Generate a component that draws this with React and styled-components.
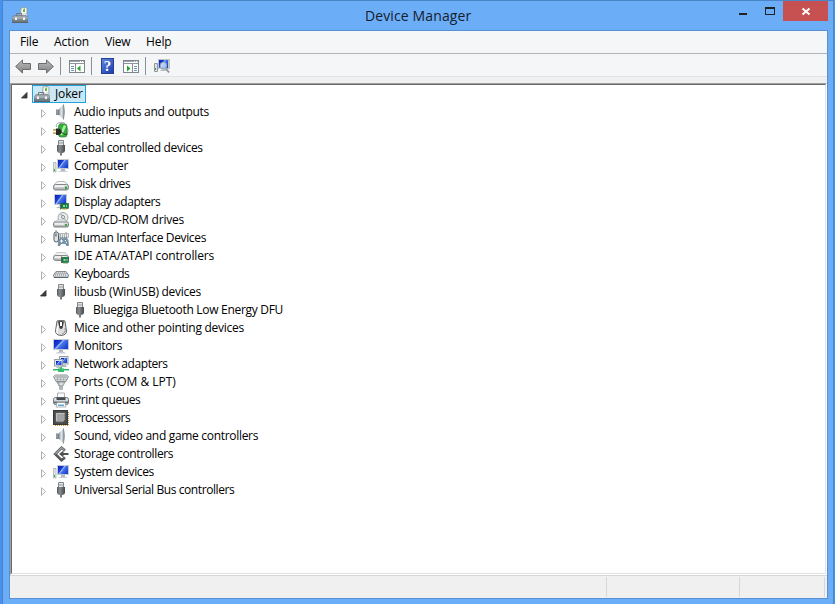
import React from "react";
import styled, { createGlobalStyle, css } from "styled-components";

const GlobalStyle = createGlobalStyle`
  * { box-sizing: border-box; }
  html, body { margin: 0; padding: 0; overflow: hidden; }
  body { font-family: "Open Sans", "Noto Sans", sans-serif; font-size: 12px; color: #000; }
`;

const Desktop = styled.div`
  width: 835px;
  height: 604px;
  padding: 0 0 0 2px;
  background: #4593ef;
`;
const Window = styled.div`
  width: 832px;
  height: 604px;
  border: 1px solid #4a86c7;
  border-bottom: 0;
  background: #6badf6;
  padding: 0 6px 0 6px;
  display: flex;
  flex-direction: column;
`;
const TitleBar = styled.header`
  height: 29px;
  flex: none;
  display: grid;
  grid-template-columns: 140px 1fr 96px;
  margin-right: -6px;
  padding-left: 3px;
`;
const TitleIcon = styled.div`
  padding: 6px 0 0 0;
  height: 23px;
`;
const Title = styled.h1`
  margin: 0;
  padding: 0 0 0 213px;
  font-size: 14px;
  font-weight: 400;
  line-height: 29px;
  white-space: nowrap;
  color: #14202e;
  letter-spacing: 0.12px;
`;
const WindowButtons = styled.div`
  display: flex;
`;
const WindowButton = styled.button`
  border: 0;
  padding: 0;
  width: ${(p) => p.$w}px;
  height: 20px;
  background: ${(p) => (p.$close ? "#c75050" : "transparent")};
  display: flex;
`;
const Client = styled.main`
  width: 819px;
  height: 569px;
  border: 1px solid #5790d3;
  background: #f0f0f0;
  display: flex;
  flex-direction: column;
`;
const MenuBar = styled.nav`
  height: 23px;
  flex: none;
  display: flex;
  background: #f5f6f7;
  border-bottom: 1px solid #b0b4b8;
  padding-left: 10px;
`;
const MenuItem = styled.span`
  width: ${(p) => p.$w}px;
  line-height: 21px;
  letter-spacing: ${(p) => p.$ls || 0}px;
`;
const ToolBar = styled.div`
  height: 23px;
  flex: none;
  display: flex;
  align-items: flex-start;
  padding: 4px 0 0 5px;
  background: #f5f6f7;
  border-bottom: 1px solid #e3e3e3;
`;
const Tool = styled.span`
  width: ${(p) => p.$w || 16}px;
  height: 17px;
  margin-right: ${(p) => p.$gap || 0}px;
`;
const ToolDivider = styled.span`
  width: 1px;
  height: 18px;
  margin: -1px ${(p) => p.$gap}px 0 0;
  background: #8c8f93;
`;
const TreePane = styled.section`
  height: 492px;
  flex: none;
  margin-top: 6px;
  border: 1px solid #a0a0a0;
  border-right-color: #fff;
  border-bottom-color: #fff;
  background: #fff;
`;
const Tree = styled.ul`
  height: 490px;
  margin: 0;
  padding: 0;
  list-style: none;
  border: 1px solid #696969;
  border-right-color: #e3e3e3;
  border-bottom-color: #e3e3e3;
`;
const Row = styled.li`
  height: 18px;
  display: flex;
  align-items: center;
  padding-left: ${(p) => 8 + p.$depth * 19}px;
`;
const Twisty = styled.span`
  width: 12px;
  height: 18px;
  flex: none;
`;
const Entry = styled.span`
  display: flex;
  height: 18px;
  border: 1px solid transparent;
  padding: 0 0 0 1px;
  white-space: nowrap;
  ${(p) => p.$selected && css`
    width: 54px;
    border-color: #26a0da;
    background: #cbe8f6;
  `}
`;
const Label = styled.span`
  padding-left: 5px;
  line-height: 15px;
  letter-spacing: ${(p) => p.$ls}px;
`;
const StatusBar = styled.footer`
  flex: 1;
  display: flex;
  border-top: 1px solid #d7d7d7;
  padding: 1px 2px 1px 0;
`;
const StatusCell = styled.span`
  ${(p) => (p.$w ? css`width: ${p.$w}px;` : css`flex: 1;`)}
  border-right: 1px solid #d7d7d7;
`;
const Svg = styled.svg`
  display: block;
  flex: none;
`;

const Icon = ({ children, w = 16, h = 16 }) => (
  <Svg width={w} height={h} viewBox={`0 0 ${w} ${h}`}>{children}</Svg>
);

const Defs = () => (
  <Svg width="0" height="0">
    <defs>
      <linearGradient id="screen" x1="0" y1="0" x2="1" y2=".6">
        <stop offset="0" stopColor="#0a1fae" />
        <stop offset=".42" stopColor="#1b40dc" />
        <stop offset=".5" stopColor="#a9c0f8" />
        <stop offset=".6" stopColor="#4a74ea" />
        <stop offset="1" stopColor="#1a45cf" />
      </linearGradient>
      <linearGradient id="metal" x1="0" y1="0" x2="0" y2="1">
        <stop offset="0" stopColor="#f4f4f4" />
        <stop offset="1" stopColor="#a4a8aa" />
      </linearGradient>
      <linearGradient id="dark" x1="0" y1="0" x2="1" y2="0">
        <stop offset="0" stopColor="#55585b" />
        <stop offset=".35" stopColor="#8b8e91" />
        <stop offset="1" stopColor="#45474a" />
      </linearGradient>
      <linearGradient id="steel" x1="0" y1="0" x2="0" y2="1">
        <stop offset="0" stopColor="#a5adb2" />
        <stop offset="1" stopColor="#6b757b" />
      </linearGradient>
      <linearGradient id="cone" x1="0" y1="0" x2="1" y2="0">
        <stop offset="0" stopColor="#8a9499" />
        <stop offset=".5" stopColor="#e4e8ea" />
        <stop offset="1" stopColor="#a9b4b9" />
      </linearGradient>
      <linearGradient id="arrow" x1="0" y1="0" x2="0" y2="1">
        <stop offset="0" stopColor="#bdbdbd" />
        <stop offset="1" stopColor="#808080" />
      </linearGradient>
    </defs>
  </Svg>
);

const DeviceManagerIcon = () => (
  <Icon>
    <path d="M8 10L9 1l5-.5 1 1V10z" fill="#dfe4e6" stroke="#90999e" strokeWidth=".7" />
    <rect x="10" y="1.500" width="4" height="4.500" fill="#fff" />
    <path d="M11 5V3l1-1.500h1V5z" fill="#62b52d" />
    <path d="M4.500 9V6.500h5V9" fill="none" stroke="#70797f" />
    <path d="M2 8.500h12l2 2.500v4H0v-4z" fill="url(#steel)" stroke="#69757c" strokeWidth=".6" />
    <path d="M.5 11h15" stroke="#c0c9ce" strokeWidth=".8" />
    <path d="M3 10.500h2v2.500H3zm8 0h2v2.500h-2z" fill="#f3f4f4" />
    <path d="M0 15.500h16" stroke="#5c656b" />
  </Icon>
);
const SpeakerIcon = () => (
  <Icon>
    <path d="M3 5.500h3v5.500H3z" fill="#7b8286" />
    <path d="M6 5l4.500-4.500v15L6 11z" fill="url(#cone)" />
    <path d="M10.500.5q2 7 0 15z" fill="#7d8f98" stroke="#7d8f98" strokeWidth=".6" />
    <path d="M4 6v4.500" stroke="#a8afb3" />
  </Icon>
);
const BatteryIcon = () => (
  <Icon>
    <path d="M3.500 5C2 1.500 7-.5 9 1.500M13.500 5q3 3 .5 7" fill="none" stroke="#899091" strokeWidth=".8" />
    <rect x="7.500" y=".5" width="4" height="2" rx="1" fill="#c9cecc" stroke="#7b837e" strokeWidth=".5" />
    <rect x="5.500" y="2" width="8.500" height="13" rx="2.500" fill="#2fb335" stroke="#317238" strokeWidth=".7" />
    <path d="M8 13l4-9.500" stroke="#aef0a4" strokeWidth="2.500" />
    <path d="M0 7.800h3.500M0 11.200h3.500" stroke="#b08c20" strokeWidth="1.200" />
    <path d="M3 6.500h2c5 0 5 6.500 0 6.500H3z" fill="#292b29" />
    <path d="M8.500 10.500c3 1 3 3 6 1.500" fill="none" stroke="#333" />
  </Icon>
);
const UsbIcon = () => (
  <Icon>
    <path d="M5.500.5h5v5h-5z" fill="#dfe2e3" stroke="#83888b" />
    <path d="M7 2v2m2-2v2" stroke="#888c8e" strokeWidth=".8" />
    <path d="M4 5h8v5.500q0 2-2.500 2.500h-3Q4 12.500 4 10.500z" fill="url(#dark)" />
    <path d="M7 13h2v2.500H7z" fill="#77797b" />
  </Icon>
);
const ComputerIcon = () => (
  <Icon>
    <path d="M.5 4.500h2.500v9.500H.5z" fill="#e4e7e8" stroke="#9da4a7" strokeWidth=".7" />
    <rect x="1" y="11" width="1" height="2" fill="#29b93a" />
    <rect x="4" y="1" width="12" height="10" fill="#c4ccd1" />
    <rect x="5" y="2" width="10" height="8" fill="url(#screen)" />
    <path d="M8 11h4v2H8z" fill="#adb5ba" />
    <path d="M5.500 14c0-2 9-2 9 0z" fill="#c5cdd1" />
  </Icon>
);
const DiskIcon = () => (
  <Icon>
    <path d="M1 9.500Q3 5.500 5 5.500h6q2 0 4 4z" fill="#f6f6f6" stroke="#a7abad" strokeWidth=".8" />
    <rect x=".5" y="8.500" width="15" height="5.500" rx="2" fill="url(#metal)" stroke="#777c7f" strokeWidth=".9" />
    <path d="M2 10.200h9" stroke="#fff" />
    <rect x="12" y="10.500" width="2" height="2.500" fill="#2da83a" />
  </Icon>
);
const DisplayIcon = () => (
  <Icon>
    <rect x="1" y="0" width="13" height="11" fill="#c4ccd1" />
    <rect x="2" y="1" width="11" height="9" fill="url(#screen)" />
    <path d="M5 11h4v3H3q2-2 6-1" fill="#aeb7bb" />
    <rect x="8" y="9.500" width="7.500" height="5" fill="#178344" stroke="#095c2b" strokeWidth=".6" />
    <path d="M10 11h2v2h-2zm3 0h1v2h-1z" fill="#9cc9aa" />
    <path d="M7.500 9v6.500" stroke="#626968" />
    <path d="M9 15h5" stroke="#cba949" />
  </Icon>
);
const DvdIcon = () => (
  <Icon>
    <circle cx="10" cy="5.500" r="5" fill="#e7ebec" stroke="#8b9498" strokeWidth=".8" />
    <path d="M10 5L7 1.500M10 5l3 4" stroke="#b5c4cb" strokeWidth="1.500" />
    <circle cx="10" cy="5" r="1.500" fill="#fff" stroke="#6b7377" strokeWidth=".8" />
    <path d="M1 10.500L3.500 8H12l3 2.500z" fill="#f5f5f5" fillOpacity=".85" stroke="#a5aaad" strokeWidth=".6" />
    <rect x=".5" y="10" width="15" height="5" rx="1.500" fill="url(#metal)" stroke="#7a7f82" />
    <path d="M2 12h9" stroke="#fff" />
    <rect x="12" y="12" width="2" height="2" fill="#36af3c" />
  </Icon>
);
const HidIcon = () => (
  <Icon>
    <path d="M3 2V0m9 3h2v5H7" fill="none" stroke="#92999d" />
    <path d="M6 3.500h9.500v4H6z" fill="#e5e8e9" stroke="#9aa1a5" strokeWidth=".7" />
    <path d="M7 5h8M7 7h8" stroke="#757d82" strokeDasharray="1 1" />
    <rect x="1" y="2" width="4.500" height="10" rx="2.200" fill="#e1e4e6" stroke="#555f65" />
    <path d="M3 3.500v3" stroke="#3b4449" />
    <path d="M5 15.500l1-6q1-2 4-.5 4-2 5 1l.5 5.500h-2l-1-2H8l-1 2z" fill="#7796ad" stroke="#596f80" strokeWidth=".6" />
    <path d="M7 11h3M8.500 9.500v3" stroke="#fff" />
    <path d="M12 10h1v1h-1zm1 2h1v1h-1z" fill="#fff" />
  </Icon>
);
const IdeIcon = () => (
  <Icon>
    <path d="M1 7.500Q3 4.500 5 4.500h6q2 0 4 3z" fill="#f2f2f2" stroke="#b0b4b6" strokeWidth=".7" />
    <rect x=".5" y="7.500" width="15" height="5" rx="2" fill="url(#metal)" stroke="#797f82" strokeWidth=".9" />
    <path d="M2 9.200h9" stroke="#fff" />
    <rect x="9" y="9.500" width="6.500" height="5" fill="#178344" stroke="#0a592b" strokeWidth=".6" />
    <path d="M10.500 11h2v2h-2zm3 0h1v2h-1z" fill="#a5cfb3" />
    <path d="M8.500 8.500v6.500" stroke="#59615c" />
    <path d="M10 15h5" stroke="#739a7c" />
  </Icon>
);
const KeyboardIcon = () => (
  <Icon>
    <path d="M3 5.500h10L15.500 9l-.5 2.500H1L.5 9z" fill="#dadddf" stroke="#7c8286" strokeWidth=".9" />
    <path d="M3 7h11M2 9h12" stroke="#81878a" strokeDasharray="1 1" />
    <path d="M2 8h12" stroke="#9aa0a3" strokeDasharray="1 1" />
    <path d="M1 11.300h14" stroke="#53595d" />
  </Icon>
);
const MouseIcon = () => (
  <Icon>
    <path d="M4 1Q8-.5 12 1L13.500 11q.4 4-5.500 4.500Q2.500 15 2.500 11z" fill="#dedede" stroke="#565656" strokeWidth=".9" />
    <path d="M5 1.500l1.500 6.500Q8 10 9.500 8L11 1.500q-3-1-6 0z" fill="#3a3a3a" />
    <path d="M7 2h2v4H7z" fill="#fff" />
    <path d="M5 6q-2 7 0 7" fill="none" stroke="#fff" strokeWidth="1.500" />
    <path d="M12 8q1 5-3 6" fill="none" stroke="#939393" />
  </Icon>
);
const MonitorIcon = () => (
  <Icon>
    <rect x="0" y="1" width="16" height="11" fill="#c4ccd1" />
    <rect x="1" y="2" width="14" height="9" fill="url(#screen)" />
    <path d="M6 12h4v2H6z" fill="#adb5b9" />
    <path d="M3 15.500c0-2.500 10-2.500 10 0z" fill="#c3cacf" />
  </Icon>
);
const NetworkIcon = () => (
  <Icon>
    <rect x="6.500" y=".5" width="8.500" height="7.500" fill="#dce2e5" stroke="#94a1a8" />
    <rect x="8" y="2" width="6" height="5" fill="url(#screen)" />
    <path d="M9 9h4l1 2H8z" fill="#b4bcc1" />
    <rect x="1.500" y="3.500" width="8" height="6.500" fill="#dce2e5" stroke="#94a1a8" />
    <rect x="3" y="5" width="5.500" height="4" fill="url(#screen)" />
    <path d="M4 10.500h3l1 1.500H3z" fill="#b8c0c4" />
    <path d="M0 13.700h16" stroke="#32b268" strokeWidth="1.500" />
    <path d="M7 11h2v1.500h2V16H5v-3.500h2z" fill="#34bd6d" />
  </Icon>
);
const PortIcon = () => (
  <Icon>
    <path d="M.5 2.500l2-1.500h11l2 1.500L13 7.500H3z" fill="#e2e5e7" stroke="#80878b" strokeWidth=".9" />
    <path d="M2 3h12" stroke="#737b80" strokeWidth=".8" />
    <path d="M3.500 5.500h2m1 0h2m1 0h2m1 0h1" stroke="#98a0a4" strokeWidth="2" />
    <path d="M4 8h8L10 12H6z" fill="url(#cone)" stroke="#828a8e" strokeWidth=".7" />
    <path d="M6.500 12h3v3.500h-3z" fill="#b4b9bc" stroke="#858b8e" strokeWidth=".5" />
  </Icon>
);
const PrinterIcon = () => (
  <Icon>
    <path d="M4.500 1h7v7h-7z" fill="#fafafa" stroke="#aeb3b6" />
    <rect x=".5" y="5.500" width="15" height="7" rx="2" fill="url(#metal)" stroke="#6e757a" />
    <path d="M3.500 5.500h9v2.500h-9z" fill="#454b50" />
    <path d="M1 10.300h14" stroke="#5e666c" strokeWidth="1.300" />
    <path d="M4 10.500h8l1 4.500H3z" fill="#fff" stroke="#8d969c" strokeWidth=".7" />
    <path d="M5 12.500h6v1.500H5z" fill="#63a8d4" />
  </Icon>
);
const ProcessorIcon = () => (
  <Icon>
    <path d="M2 15.500h13M15.500 2v13" stroke="#c99a36" strokeDasharray="1 1" />
    <rect x=".5" y=".5" width="14" height="14" fill="#4a4b4b" stroke="#383939" />
    <path d="M3 3h9v7l-2 2H3z" fill="#a3a4a5" stroke="#6a6b6c" strokeWidth=".8" />
    <path d="M3.500 11V3.500h8" fill="none" stroke="#c2c3c4" />
  </Icon>
);
const StorageIcon = () => (
  <Icon>
    <path d="M12 4.500L8.500 1.800 2.200 8l6.300 6.200L12 11.500" fill="none" stroke="#55585a" strokeWidth="2.600" />
    <path d="M11.500 4.200L8.500 1.800 2.200 8" fill="none" stroke="#9a9d9e" strokeWidth="1.400" />
    <path d="M6 8l4.500-3.500V7H15.500v2h-5v2.500z" fill="#4f5152" />
  </Icon>
);

const Collapsed = () => (
  <Icon w={12} h={18}><path d="M2.500 6.700l4 3.800-4 3.800z" fill="#fff" stroke="#a6a6a6" strokeWidth=".9" /></Icon>
);
const Expanded = () => (
  <Icon w={12} h={18}><path d="M7 7.500v5.500H1.500z" fill="#404040" stroke="#262626" strokeWidth=".8" /></Icon>
);
const Arrow = ({ right }) => (
  <Icon w={16} h={17}>
    <path
      transform={right ? "matrix(-1 0 0 1 16 0)" : undefined}
      d="M.6 8.500L7.500 2v3.500h8v6h-8V15z"
      fill="url(#arrow)" stroke="#6c6c6c" strokeLinejoin="round" />
  </Icon>
);
const PanelIcon = ({ flip }) => (
  <Icon w={16} h={17}>
    <rect x=".5" y="2.500" width="15" height="12" fill="#fff" stroke="#7e868c" />
    <path d="M1 3.500h14" stroke="#9ca5ad" />
    <path d="M11 3.500h1m1 0h1" stroke="#fff" />
    <path d="M1 5.500h14" stroke="#8c959d" />
    {flip ? (
      <>
        <path d="M9.500 6v8" stroke="#858e95" />
        <path d="M11 8.500h3m-3 2h3m-3 2h3" stroke="#6c91b2" />
        <path d="M4 7.500l3.500 3-3.500 3z" fill="#23a42b" />
      </>
    ) : (
      <>
        <path d="M6.500 6v8" stroke="#858e95" />
        <path d="M2 8.500h3m-3 2h3m-3 2h3" stroke="#6c91b2" />
        <path d="M11.500 7.500v6l-3.500-3z" fill="#23a42b" />
      </>
    )}
  </Icon>
);
const HelpMark = styled.span`
  display: block;
  width: 13px;
  height: 16px;
  background: linear-gradient(135deg, #5f86df, #1b3cab);
  border: 1px solid #243f95;
  color: #fff;
  font: 700 15px/14px "Liberation Serif", serif;
  text-align: center;
`;
const ScanIcon = () => (
  <Icon w={16} h={17}>
    <path d="M.5 5.500h3v8h-3z" fill="#dce0e2" stroke="#929a9e" />
    <path d="M1.500 10v2" stroke="#30a843" />
    <rect x="4" y="1" width="12" height="10" fill="#bcc5ca" />
    <rect x="5" y="2" width="9" height="8" fill="url(#screen)" />
    <path d="M6 13h7l-2-2H8z" fill="#b5bec3" />
    <circle cx="9.500" cy="7.500" r="3.300" fill="#d7ebfa" fillOpacity=".75" stroke="#8aa0b2" />
    <path d="M12 10.500l3 4" stroke="#8d959b" strokeWidth="1.800" />
  </Icon>
);

const devices = [
  ["Audio inputs and outputs", SpeakerIcon, -0.29],
  ["Batteries", BatteryIcon, -0.5],
  ["Cebal controlled devices", UsbIcon, -0.29],
  ["Computer", ComputerIcon, -0.3],
  ["Disk drives", DiskIcon, -0.4],
  ["Display adapters", DisplayIcon, -0.44],
  ["DVD/CD-ROM drives", DvdIcon, -0.2],
  ["Human Interface Devices", HidIcon, -0.35],
  ["IDE ATA/ATAPI controllers", IdeIcon, -0.14],
  ["Keyboards", KeyboardIcon, -0.44],
  ["libusb (WinUSB) devices", UsbIcon, -0.26, "open"],
  ["Bluegiga Bluetooth Low Energy DFU", UsbIcon, -0.3, "leaf"],
  ["Mice and other pointing devices", MouseIcon, -0.26],
  ["Monitors", MonitorIcon, -0.3],
  ["Network adapters", NetworkIcon, -0.44],
  ["Ports (COM & LPT)", PortIcon, -0.03],
  ["Print queues", PrinterIcon, -0.4],
  ["Processors", ProcessorIcon, -0.5],
  ["Sound, video and game controllers", SpeakerIcon, -0.31],
  ["Storage controllers", StorageIcon, -0.37],
  ["System devices", ComputerIcon, -0.35],
  ["Universal Serial Bus controllers", UsbIcon, -0.41],
];

export default function App() {
  return (
    <Desktop>
      <GlobalStyle />
      <Window>
        <TitleBar>
          <TitleIcon><DeviceManagerIcon /></TitleIcon>
          <Title>Device Manager</Title>
          <WindowButtons>
            <WindowButton $w={26} aria-label="Minimize">
              <Icon w={26} h={20}><path d="M2 12h8v2H2z" fill="#222" /></Icon>
            </WindowButton>
            <WindowButton $w={20} aria-label="Maximize">
              <Icon w={20} h={20}><path d="M2 6h10v8H2zM3 8v5h8V8z" fill="#222" fillRule="evenodd" /></Icon>
            </WindowButton>
            <WindowButton $w={45} $close aria-label="Close">
              <Icon w={45} h={20}><path d="M19.500 7.500l7 6m0-6l-7 6" stroke="#fff" strokeWidth="1.900" /></Icon>
            </WindowButton>
          </WindowButtons>
        </TitleBar>
        <Client>
          <MenuBar>
            <MenuItem $w={34} $ls={-0.2}>File</MenuItem>
            <MenuItem $w={51}>Action</MenuItem>
            <MenuItem $w={41} $ls={-0.2}>View</MenuItem>
            <MenuItem $w={40} $ls={-0.1}>Help</MenuItem>
          </MenuBar>
          <ToolBar>
            <Tool $gap={7}><Arrow /></Tool>
            <Tool $gap={6}><Arrow right /></Tool>
            <ToolDivider $gap={8} />
            <Tool $gap={6}><PanelIcon /></Tool>
            <ToolDivider $gap={9} />
            <Tool $w={13} $gap={9}><HelpMark>?</HelpMark></Tool>
            <Tool $gap={6}><PanelIcon flip /></Tool>
            <ToolDivider $gap={8} />
            <Tool><ScanIcon /></Tool>
          </ToolBar>
          <TreePane>
            <Tree>
              <Row $depth={0}>
                <Twisty><Expanded /></Twisty>
                <Entry $selected><DeviceManagerIcon /><Label $ls={-0.15}>Joker</Label></Entry>
              </Row>
              {devices.map(([name, Glyph, ls, state]) => (
                <Row key={name} $depth={state === "leaf" ? 2 : 1}>
                  <Twisty>{state === "open" ? <Expanded /> : state === "leaf" ? null : <Collapsed />}</Twisty>
                  <Entry><Glyph /><Label $ls={ls}>{name}</Label></Entry>
                </Row>
              ))}
            </Tree>
          </TreePane>
          <StatusBar>
            <StatusCell />
            <StatusCell $w={133} />
            <StatusCell $w={85} />
          </StatusBar>
        </Client>
      </Window>
      <Defs />
    </Desktop>
  );
}
